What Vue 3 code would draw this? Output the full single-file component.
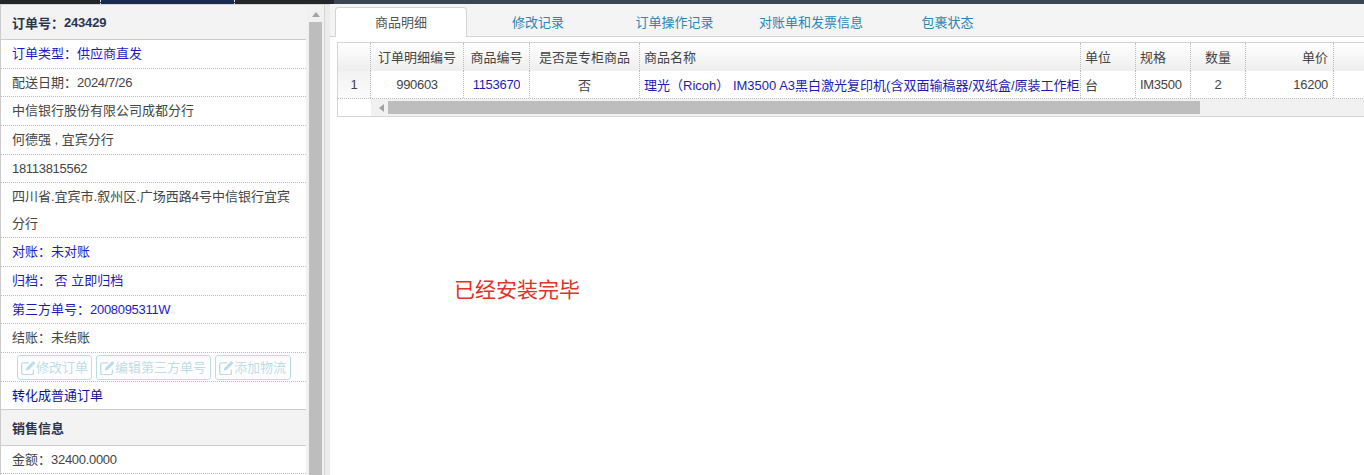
<script setup>
const topRows = [
  { text: '订单类型：供应商直发', blue: true, h: 29 },
  { text: '配送日期：2024/7/26', h: 28 },
  { text: '中信银行股份有限公司成都分行', h: 29 },
  { text: '何德强 , 宜宾分行', h: 29 },
  { text: '18113815562', h: 28 },
  { text: '四川省.宜宾市.叙州区.广场西路4号中信银行宜宾分行', h: 55 },
  { text: '对账：未对账', blue: true, h: 29 },
  { text: '归档： 否 立即归档', blue: true, h: 29 },
  { text: '第三方单号：2008095311W', blue: true, h: 28 },
  { text: '结账：未结账', h: 29 },
]
const btns = ['修改订单', '编辑第三方单号', '添加物流']
const tabs = [
  { t: '商品明细', active: true },
  { t: '修改记录' },
  { t: '订单操作记录' },
  { t: '对账单和发票信息' },
  { t: '包裹状态' },
]
const cols = [
  { t: '', w: 33, cls: 'c first', v: '1' },
  { t: '订单明细编号', w: 93, cls: 'c', v: '990603' },
  { t: '商品编号', w: 66, cls: 'c', v: '1153670', blue: true },
  { t: '是否是专柜商品', w: 110, cls: 'c', v: '否' },
  { t: '商品名称', w: 441, cls: 'l name', v: '理光（Ricoh） IM3500 A3黑白激光复印机(含双面输稿器/双纸盒/原装工作柜', blue: true },
  { t: '单位', w: 55, cls: 'l', v: '台' },
  { t: '规格', w: 55, cls: 'l', v: 'IM3500' },
  { t: '数量', w: 55, cls: 'c', v: '2' },
  { t: '单价', w: 88, cls: 'r', v: '16200' },
]
const parts = (s) => s.split(/([\x21-\x7e]{3,})/).filter(Boolean).map((p) => ({ p, latin: /^[\x21-\x7e]{3,}$/.test(p) }))
</script>

<template>
  <div class="page">
    <div class="topbar">
      <i class="seg s1" /><i class="seg s2" /><i class="seg s3" /><i class="seg s4" />
    </div>
    <div class="main">
      <aside class="side">
        <div class="side-list">
          <div class="head first">订单号：<span class="num">243429</span></div>
          <div v-for="r in topRows" :key="r.text" class="row" :class="{ blue: r.blue }" :style="{ height: r.h + 'px' }">
            <div><span v-for="(x, i) in parts(r.text)" :key="i" :class="{ num: x.latin }">{{ x.p }}</span></div>
          </div>
          <div class="row btnrow">
            <span v-for="b in btns" :key="b" class="btn">
              <svg viewBox="1.4 1 13.4 13.4" width="15" height="15"><path d="M12.5 9.5v3A1.5 1.5 0 0 1 11 14H3.5A1.5 1.5 0 0 1 2 12.5V5a1.5 1.5 0 0 1 1.5-1.5h5" fill="none" stroke="currentColor" stroke-width="1.2"/><path d="M5.6 10.6 6.2 8 12.3 1.8 14.4 3.9 8.2 10z" fill="currentColor"/></svg>{{ b }}
            </span>
          </div>
          <div class="row navy plain">转化成普通订单</div>
          <div class="head second">销售信息</div>
          <div class="row"><div>金额：<span class="num">32400.0000</span></div></div>
        </div>
        <div class="scroll">
          <svg class="arrow" viewBox="0 0 8 5" width="8" height="5"><path d="M0 5 4 0l4 5z" fill="#a3a3a3"/></svg>
          <div class="thumb" />
        </div>
        <div class="gutter" />
      </aside>
      <section class="content">
        <nav class="tabs">
          <div v-for="t in tabs" :key="t.t" class="tab" :class="{ active: t.active }">{{ t.t }}</div>
        </nav>
        <div class="grid">
          <div class="tr th">
            <div v-for="c in cols" :key="c.w + c.t" class="cell" :class="c.cls" :style="{ width: c.w + 'px' }">{{ c.t }}</div>
          </div>
          <div class="tr td">
            <div v-for="c in cols" :key="c.w + c.t" class="cell" :class="[c.cls, { blue: c.blue }]" :style="{ width: c.w + 'px' }">
              <span class="clip"><span v-for="(x, i) in parts(c.v)" :key="i" :class="{ num: x.latin }">{{ x.p }}</span></span>
            </div>
          </div>
          <div class="hbar">
            <div class="hleft" />
            <svg class="harrow" viewBox="0 0 5 8" width="5" height="8"><path d="M5 0 0 4l5 4z" fill="#a3a3a3"/></svg>
            <div class="hthumb" />
          </div>
        </div>
        <p class="note">已经安装完毕</p>
      </section>
    </div>
  </div>
</template>

<style>
html, body { margin: 0; background: #fff; overflow: hidden; }
</style>

<style scoped>
.page {
  width: 1364px;
  height: 475px;
  overflow: hidden;
  font-family: "Liberation Sans", "Noto Sans CJK SC", sans-serif;
  font-size: 13px;
  color: #444;
  display: flex;
  flex-direction: column;
}
.topbar { height: 4px; flex: none; display: flex; }
.seg { display: block; height: 4px; }
.s1 { width: 100px; background: #22262b; border-right: 1px dotted #ddd; }
.s2 { width: 133px; background: #172a52; border-right: 1px dotted #ddd; }
.s3 { width: 99px; background: #23272c; }
.s4 { flex: 1; background: #3a4654; }
.main { flex: 1; display: flex; min-height: 0; }
.side { width: 330px; flex: none; display: flex; border-top: 1px solid #d4d4d4; box-sizing: border-box; }
.side-list { width: 306px; flex: none; border-left: 1px solid #ccc; box-sizing: border-box; }
.num { letter-spacing: -0.3px; }
.head {
  background: #f3f3f3;
  font-weight: 700;
  color: #2b3550;
  display: flex;
  align-items: center;
  padding-left: 11px;
}
.head .num { letter-spacing: -0.2px; }
.head.first { height: 34px; border-bottom: 1px solid #ccc; }
.head.second { height: 35px; border-top: 1px solid #ccc; border-bottom: 1px solid #ccc; }
.row {
  box-sizing: border-box;
  padding: 0 11px;
  border-bottom: 1px dotted #bbb;
  display: flex;
  align-items: flex-start;
  line-height: 27px;
  height: 28px;
}
.row.blue { color: #1f1ac0; }
.row.navy { color: #0f0f96; }
.row.plain { border-bottom: 0; height: 27px; }
.row.btnrow { height: 29px; padding: 0 0 0 16px; gap: 4px; color: #bcdde8; align-items: center; }
.btn {
  display: flex;
  align-items: center;
  height: 25px;
  box-sizing: border-box;
  padding: 0 3px;
  border: 1px solid #bcdde8;
  border-radius: 3px;
  white-space: nowrap;
}
.btn:not(:first-child) { padding-right: 4px; }
.scroll { width: 18px; background: #f1f1f1; position: relative; flex: none; }
.arrow { display: block; margin: 7px 0 0 6px; }
.thumb { position: absolute; left: 3px; top: 17px; width: 13px; bottom: 0; background: #bdbdbd; }
.gutter { width: 6px; flex: none; background: #ececec; border-left: 1px solid #d4d4d4; box-sizing: border-box; }
.content { flex: 1; min-width: 0; }
.tabs {
  display: flex;
  box-sizing: border-box;
  height: 33px;
  padding: 3px 0 0 5px;
  gap: 5.5px;
  background: #f4f4f4;
  border-bottom: 1px solid #d4d4d4;
}
.tab {
  width: 131px;
  height: 30px;
  flex: none;
  display: flex;
  align-items: center;
  justify-content: center;
  padding-bottom: 2px;
  color: #2a86b5;
  white-space: nowrap;
  box-sizing: border-box;
}
.tab.active { width: 132px; color: #555; background: #fff; border: 1px solid #d4d4d4; border-bottom: 0; border-radius: 4px 4px 0 0; }
.grid { margin: 5px -2px 0 7px; border: 1px solid #d4d4d4; overflow: hidden; }
.tr { display: flex; }
.th { height: 28px; background: linear-gradient(#fff, #eee); }
.th .cell { padding-bottom: 2px; }
.td { height: 28px; border-bottom: 1px dotted #bbb; box-sizing: border-box; }
.td .cell { padding-bottom: 1px; }
.cell {
  box-sizing: border-box;
  border-right: 1px dotted #bbb;
  padding: 0 5px;
  display: flex;
  align-items: center;
  white-space: nowrap;
  overflow: hidden;
  flex: none;
}
.clip { overflow: hidden; }
.c { justify-content: center; }
.l { justify-content: flex-start; padding-left: 4px; padding-right: 0; }
.r { justify-content: flex-end; }
.name .num { letter-spacing: 0; }
.td .first { background: linear-gradient(#f2f2f2, #fbfbfb); }
.td .blue { color: #1c1cb0; }
.hbar { height: 17px; background: #f1f1f1; display: flex; align-items: center; }
.hleft { width: 33px; height: 17px; background: #fff; flex: none; }
.harrow { margin-left: 8px; flex: none; }
.hthumb { margin-left: 4px; width: 812px; height: 13px; background: #bdbdbd; flex: none; }
.note { margin: 159px 0 0 124px; color: #e2302a; font-size: 21px; line-height: 28px; }
</style>
